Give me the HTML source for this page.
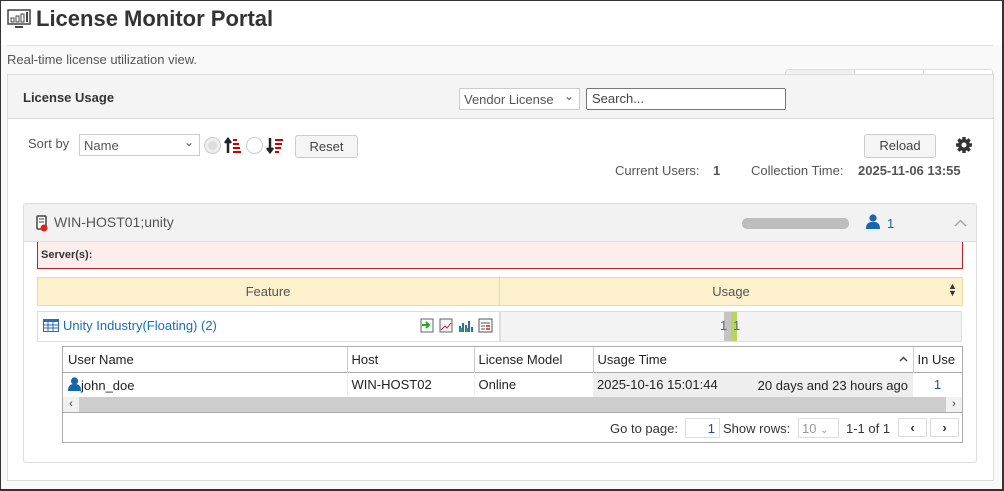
<!DOCTYPE html>
<html><head><meta charset="utf-8"><style>
*{box-sizing:border-box;margin:0;padding:0}
body{width:1004px;height:491px;position:relative;background:#f9f9f9;font-family:"Liberation Sans",sans-serif;font-size:13px;color:#333;overflow:hidden}
.a{position:absolute}
#frame{left:0;top:0;width:1004px;height:491px;border:1px solid #333;border-right-width:2px;border-bottom-width:2px}
.btn{border:1px solid #ccc;border-radius:3px;background:#f5f5f5;text-align:center;color:#444;font-size:13px}
.sel{border:1px solid #ccc;background:#fff;color:#555;font-size:13px;padding:3px 4px}
td{font-size:13px;color:#222}
</style></head><body>
<div id="frame" class="a"></div>
<div class="a" style="left:1px;top:1px;width:1001px;height:44px;background:#fff"></div>
<svg class="a" style="left:7px;top:9px" width="24" height="20" viewBox="0 0 24 20"><rect x="1" y="1" width="22" height="14" fill="none" stroke="#444" stroke-width="1.5"/><rect x="4" y="9" width="3" height="4" fill="none" stroke="#444"/><rect x="9" y="7" width="3" height="6" fill="none" stroke="#444"/><rect x="14" y="5" width="3" height="8" fill="none" stroke="#444"/><rect x="19" y="3" width="2" height="10" fill="#444"/><path d="M8 18h8" stroke="#444" stroke-width="2"/></svg>
<div class="a" style="left:36px;top:6px;font-size:22px;font-weight:bold;color:#333">License Monitor Portal</div>
<div class="a" style="left:7px;top:45px;width:986px;height:1px;background:#e2e2e2"></div>
<div class="a" style="left:7px;top:52px;color:#555;font-size:13px">Real-time license utilization view.</div>
<div class="a" style="left:785px;top:69px;width:208px;height:6px;border:1px solid #ddd;border-bottom:none;border-radius:3px 3px 0 0;background:#fff"></div>
<div class="a" style="left:786px;top:70px;width:68px;height:5px;background:#f0f0f0"></div>
<div class="a" style="left:854px;top:70px;width:1px;height:5px;background:#ddd"></div>
<div class="a" style="left:923px;top:70px;width:1px;height:5px;background:#ddd"></div>
<div class="a" style="left:7px;top:74px;width:987px;height:407px;border:1px solid #ddd;background:#fff"></div>
<div class="a" style="left:8px;top:75px;width:985px;height:44px;background:#f4f4f4;border-bottom:1px solid #ddd"></div>
<div class="a" style="left:23px;top:90px;font-weight:bold;font-size:13px;color:#333">License Usage</div>
<div class="a sel" style="left:459px;top:88px;width:121px;height:22px">Vendor License<span style="position:absolute;right:5px;top:0px;font-size:12px">&#8964;</span></div>
<div class="a" style="left:586px;top:88px;width:200px;height:22px;border:1px solid #777;border-radius:2px;background:#fff;padding:2px 5px;color:#444">Search...</div>
<div class="a" style="left:28px;top:136px;color:#555">Sort by</div>
<div class="a sel" style="left:79px;top:134px;width:121px;height:22px">Name<span style="position:absolute;right:5px;top:0px;font-size:12px">&#8964;</span></div>
<div class="a" style="left:204px;top:137px;width:17px;height:17px;border:1px solid #ccc;border-radius:50%;background:#eee"><div style="margin:3px;width:9px;height:9px;border-radius:50%;background:#ddd"></div></div>
<svg class="a" style="left:224px;top:137px" width="18" height="17"><path d="M4 16V4M1 6l3-4 3 4" stroke="#222" stroke-width="2.5" fill="none"/><rect x="9" y="2" width="4" height="2" fill="#c00"/><rect x="9" y="6" width="6" height="2" fill="#c00"/><rect x="9" y="10" width="7" height="2" fill="#c00"/><rect x="9" y="14" width="8" height="2" fill="#c00"/></svg>
<div class="a" style="left:246px;top:137px;width:17px;height:17px;border:1px solid #ccc;border-radius:50%;background:#fff"></div>
<svg class="a" style="left:266px;top:137px" width="18" height="17"><path d="M4 1v12M1 11l3 4 3-4" stroke="#222" stroke-width="2.5" fill="none"/><rect x="9" y="2" width="8" height="2" fill="#c00"/><rect x="9" y="6" width="7" height="2" fill="#c00"/><rect x="9" y="10" width="6" height="2" fill="#c00"/><rect x="9" y="14" width="4" height="2" fill="#c00"/></svg>
<div class="a btn" style="left:295px;top:135px;width:63px;height:23px;line-height:21px">Reset</div>
<div class="a btn" style="left:864px;top:134px;width:72px;height:24px;line-height:22px">Reload</div>
<svg class="a" style="left:955px;top:136px" width="18" height="18" viewBox="0 0 18 18"><g fill="#333"><circle cx="9" cy="9" r="6"/><rect x="7.3" y="1" width="3.4" height="16"/><rect x="1" y="7.3" width="16" height="3.4"/><rect x="7.3" y="1" width="3.4" height="16" transform="rotate(45 9 9)"/><rect x="7.3" y="1" width="3.4" height="16" transform="rotate(-45 9 9)"/></g><circle cx="9" cy="9" r="2.5" fill="#fff"/></svg>
<div class="a" style="left:615px;top:163px;color:#555">Current Users:</div>
<div class="a" style="left:713px;top:163px;font-weight:bold;color:#555">1</div>
<div class="a" style="left:751px;top:163px;color:#555">Collection Time:</div>
<div class="a" style="left:858px;top:163px;font-weight:bold;color:#555">2025-11-06 13:55</div>
<div class="a" style="left:23px;top:203px;width:954px;height:260px;border:1px solid #ddd;border-radius:3px;background:#fff"></div>
<div class="a" style="left:24px;top:204px;width:952px;height:38px;background:#f2f2f2;border-bottom:1px solid #ddd"></div>
<svg class="a" style="left:36px;top:215px" width="12" height="17"><rect x="1" y="1" width="9" height="13" rx="1" fill="#fff" stroke="#444" stroke-width="1.5"/><path d="M3 4h5M3 7h5" stroke="#444"/><circle cx="8" cy="13" r="3.5" fill="#d22"/></svg>
<div class="a" style="left:54px;top:214px;color:#555;font-size:14px">WIN-HOST01;unity</div>
<div class="a" style="left:742px;top:218px;width:107px;height:11px;border-radius:5px;background:#bdbdbd"></div>
<svg class="a" style="left:866px;top:214px" width="14" height="15"><circle cx="7" cy="4" r="3.6" fill="#1565b0"/><path d="M0 15c0-6 3-7 7-7s7 1 7 7z" fill="#1565b0"/></svg>
<div class="a" style="left:887px;top:216px;color:#1565b0;font-size:13px">1</div>
<svg class="a" style="left:954px;top:219px" width="13" height="8"><path d="M1 7l5.5-5.5L12 7" stroke="#aaa" stroke-width="1.5" fill="none"/></svg>
<div class="a" style="left:37px;top:242px;width:926px;height:27px;background:#fdeeee;border:1px solid #b22;border-top:none"></div>
<div class="a" style="left:41px;top:249px;font-weight:bold;font-size:11px;color:#333">Server(s):</div>
<div class="a" style="left:37px;top:277px;width:926px;height:29px;background:#fdf0cc;border:1px solid #e9d9a6"></div>
<div class="a" style="left:499px;top:277px;width:1px;height:29px;background:#e9d9a6"></div>
<div class="a" style="left:37px;top:284px;width:462px;text-align:center;color:#555">Feature</div>
<div class="a" style="left:500px;top:284px;width:462px;text-align:center;color:#555">Usage</div>
<div class="a" style="left:948px;top:283px;font-size:9px;color:#333;line-height:7px">&#9650;<br>&#9660;</div>
<div class="a" style="left:37px;top:311px;width:463px;height:31px;border:1px solid #ddd;background:#fff"></div>
<div class="a" style="left:500px;top:311px;width:462px;height:31px;border:1px solid #ddd;background:#f3f3f3"></div>
<div class="a" style="left:724px;top:312px;width:7px;height:29px;background:#c4c4c4"></div>
<div class="a" style="left:731px;top:312px;width:6px;height:29px;background:#b5d65a"></div>
<div class="a" style="left:720px;top:318px;color:#666">1</div>
<div class="a" style="left:733px;top:318px;color:#666">1</div>
<svg class="a" style="left:43px;top:319px" width="16" height="13"><rect x="0.5" y="0.5" width="15" height="12" fill="#fff" stroke="#2a6cb8"/><rect x="0" y="0" width="16" height="3" fill="#2a6cb8"/><path d="M0 6h16M0 9h16M5 3v10M10 3v10" stroke="#2a6cb8"/></svg>
<div class="a" style="left:63px;top:318px;color:#1a6cc0;font-size:13px">Unity Industry(Floating) (2)</div>
<svg class="a" style="left:420px;top:318px" width="75" height="15"><rect x="1" y="1" width="12" height="13" fill="#fff" stroke="#567"/><path d="M2 7h6M6 4l3 3-3 3" stroke="#2a2" stroke-width="2" fill="none"/><rect x="20" y="1" width="12" height="13" fill="#f4f4f4" stroke="#567"/><path d="M21 12l4-4 2 2 4-5" stroke="#c22" fill="none"/><path d="M40 14V8M43 14V5M46 14V7M49 14V3M52 14V9" stroke="#2a6cb8" stroke-width="2"/><path d="M41 14V10M47 14V10" stroke="#3a3" stroke-width="2"/><rect x="59" y="1" width="13" height="13" fill="#fff" stroke="#555"/><path d="M61 5h9M61 8h4M61 11h4" stroke="#555"/><path d="M66 8h4M66 11h4" stroke="#c22" stroke-width="1.5"/></svg>
<div class="a" style="left:62px;top:346px;width:901px;height:97px;border:1px solid #aaa;background:#fff"></div>
<table class="a" style="left:63px;top:347px;width:899px;border-collapse:collapse;table-layout:fixed">
<colgroup><col style="width:284px"><col style="width:127px"><col style="width:119px"><col style="width:320px"><col style="width:49px"></colgroup>
<tr style="height:25px;border-bottom:1px solid #aaa"><td style="padding-left:5px">User Name</td><td style="border-left:1px solid #ccc;padding-left:4px">Host</td><td style="border-left:1px solid #ccc;padding-left:4px">License Model</td><td style="border-left:1px solid #ccc;padding-left:4px;position:relative">Usage Time<svg style="position:absolute;right:5px;top:9px" width="9" height="6"><path d="M1 5l3.5-3.5L8 5" stroke="#444" stroke-width="1.5" fill="none"/></svg></td><td style="border-left:1px solid #ccc;padding-left:4px;white-space:nowrap;overflow:hidden">In Use</td></tr>
<tr style="height:25px"><td style="padding-left:5px"><svg width="13" height="14" style="vertical-align:-1px"><circle cx="6.5" cy="4" r="3.6" fill="#1565b0"/><path d="M0 14c0-6 3-7 6.5-7s6.5 1 6.5 7z" fill="#1565b0"/></svg>john_doe</td><td style="border-left:1px solid #eee;padding-left:4px">WIN-HOST02</td><td style="border-left:1px solid #eee;padding-left:4px">Online</td><td style="background:#eee;padding-left:4px;position:relative">2025-10-16 15:01:44<span style="position:absolute;right:5px;top:5px">20 days and 23 hours ago</span></td><td style="text-align:center;color:#1a4fa0">1</td></tr>
</table>
<div class="a" style="left:63px;top:397px;width:899px;height:16px;background:#cdcdcd;border-bottom:1px solid #aaa"></div>
<div class="a" style="left:63px;top:397px;width:16px;height:15px;background:#f1f1f1;text-align:center;font-size:11px;line-height:15px">&#8249;</div>
<div class="a" style="left:946px;top:397px;width:16px;height:15px;background:#f1f1f1;text-align:center;font-size:11px;line-height:15px">&#8250;</div>
<div class="a" style="left:610px;top:421px;color:#333">Go to page:</div>
<div class="a" style="left:685px;top:418px;width:35px;height:20px;border:1px solid #ddd;text-align:right;padding:2px 4px;color:#1a4fa0">1</div>
<div class="a" style="left:723px;top:421px;color:#333">Show rows:</div>
<div class="a" style="left:798px;top:418px;width:41px;height:20px;border:1px solid #ddd;color:#999;padding:2px 3px">10 <span style="font-size:10px">&#8964;</span></div>
<div class="a" style="left:846px;top:421px;color:#333">1-1 of 1</div>
<div class="a" style="left:898px;top:418px;width:29px;height:19px;border:1px solid #ddd;text-align:center;line-height:17px;font-weight:bold">&#8249;</div>
<div class="a" style="left:930px;top:418px;width:29px;height:19px;border:1px solid #ddd;text-align:center;line-height:17px;font-weight:bold">&#8250;</div>
</body></html>
